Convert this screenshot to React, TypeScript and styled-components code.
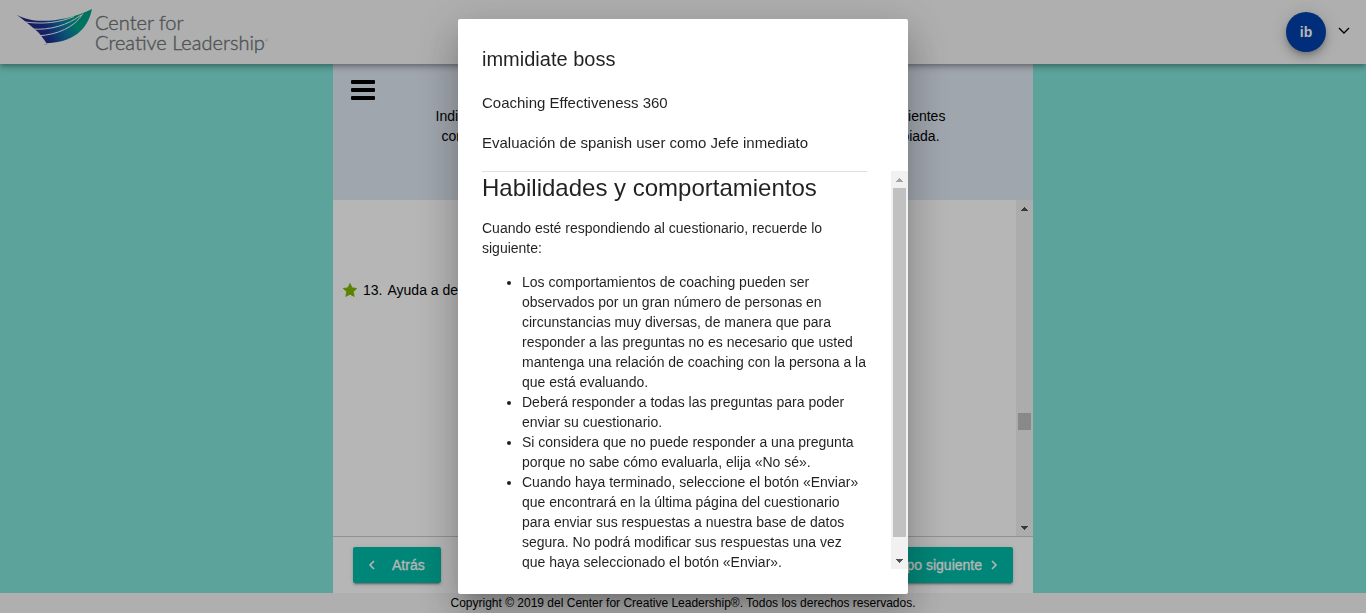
import React from "react";
import styled, { createGlobalStyle } from "styled-components";

const GlobalStyle = createGlobalStyle`
  * { box-sizing: border-box; }
  body {
    margin: 0;
    background: #80e5da;
    color: #000;
    font-family: "Liberation Sans", Arial, sans-serif;
    font-size: 14px;
    line-height: 20px;
  }
`;

const Page = styled.div`
  display: flex;
  flex-direction: column;
  height: 100vh;
`;

const TopBar = styled.header`
  flex: none;
  display: flex;
  align-items: center;
  justify-content: space-between;
  height: 64px;
  padding: 0 16px;
  background: #f5f5f5;
  position: relative;
  box-shadow: 0 2px 4px -1px rgba(0, 0, 0, 0.2), 0 4px 5px rgba(0, 0, 0, 0.14),
    0 1px 10px rgba(0, 0, 0, 0.12);
`;

const Brand = styled.a`
  display: flex;
  align-items: center;
  gap: 1px;
  color: #6f7779;
  text-decoration: none;
`;

const BrandName = styled.span`
  font-family: Lato, sans-serif;
  font-weight: 300;
  font-size: 20px;
  line-height: 20px;
  -webkit-text-stroke: 0.4px #6f7779;
  sup {
    font-size: 4px;
    line-height: 0;
    vertical-align: 8px;
    -webkit-text-stroke: 0;
  }
`;

const Account = styled.div`
  display: flex;
  align-items: center;
  gap: 12px;
`;

const Avatar = styled.span`
  display: grid;
  place-items: center;
  width: 40px;
  height: 40px;
  border-radius: 50%;
  background: #0041ab;
  color: #fff;
  font-weight: 700;
  box-shadow: 0 3px 5px -1px rgba(0, 0, 0, 0.2), 0 6px 10px rgba(0, 0, 0, 0.14),
    0 1px 18px rgba(0, 0, 0, 0.12);
`;

const IconButton = styled.button`
  display: flex;
  padding: 0;
  border: 0;
  background: none;
  color: #000;
`;

const Survey = styled.main`
  flex: 1;
  min-height: 0;
  display: flex;
  flex-direction: column;
  width: 100%;
  max-width: 700px;
  margin: 0 auto;
  background: #fff;
`;

const Intro = styled.section`
  flex: none;
  height: 136px;
  padding: 16px 18px;
  background: #e1e9f4;
`;

const IntroText = styled.p`
  max-width: 535px;
  margin: 6px auto 0;
  padding-left: 15px;
  text-align: center;
`;

const Questions = styled.section`
  flex: 1;
  min-height: 0;
  display: flex;
`;

const QuestionList = styled.div`
  flex: 1;
  overflow: hidden;
  padding: 80px 9px;
`;

const Question = styled.div`
  display: flex;
  align-items: center;
  gap: 5px;
`;

const ScrollTrack = styled.div`
  flex: none;
  display: flex;
  flex-direction: column;
  align-items: center;
  justify-content: space-between;
  width: 17px;
  background: #f1f1f1;
`;

const ScrollArrow = styled.svg`
  flex: none;
  display: block;
  width: 17px;
  height: 17px;
`;

const ScrollGap = styled.div<{ $grow: number }>`
  flex: ${(p) => p.$grow} 1 0;
`;

const ScrollThumb = styled.div<{ $grow?: number }>`
  flex: ${(p) => (p.$grow ? `${p.$grow} 1 0` : "0 0 17px")};
  width: 13px;
  background: #c1c1c1;
`;

const Actions = styled.div`
  flex: none;
  display: flex;
  align-items: center;
  justify-content: space-between;
  padding: 10px 20px;
  border-top: 1px solid #ccc;
`;

const NavButton = styled.button`
  display: flex;
  align-items: center;
  gap: 11px;
  height: 36px;
  padding: 0 16px 0 10px;
  border: 0;
  border-radius: 2px;
  background: #00bca8;
  color: #fff;
  font: 500 14px/36px "Liberation Sans", Arial, sans-serif;
  -webkit-text-stroke: 0.3px #fff;
  box-shadow: 0 3px 1px -2px rgba(0, 0, 0, 0.2), 0 2px 2px rgba(0, 0, 0, 0.14),
    0 1px 5px rgba(0, 0, 0, 0.12);
`;

const NextButton = styled(NavButton)`
  gap: 3px;
  padding: 0 10px 0 16px;
`;

const Copyright = styled.footer`
  flex: none;
  background: #f5f5f5;
  font-size: 12px;
  text-align: center;
`;

const Backdrop = styled.div`
  position: fixed;
  inset: 0;
  display: flex;
  align-items: center;
  justify-content: center;
  background: rgba(0, 0, 0, 0.288);
`;

const Dialog = styled.div`
  width: 450px;
  max-width: 80vw;
  padding: 24px 0 25px;
  border-radius: 2px;
  background: #fff;
  color: rgba(0, 0, 0, 0.87);
  box-shadow: 0 11px 15px -7px rgba(0, 0, 0, 0.2),
    0 24px 38px 3px rgba(0, 0, 0, 0.14), 0 9px 46px 8px rgba(0, 0, 0, 0.12);
`;

const DialogHead = styled.div`
  padding: 0 24px 18px;
`;

const DialogTitle = styled.h1`
  margin: 0 0 18px;
  font-size: 20px;
  font-weight: 400;
  line-height: 32px;
`;

const DialogLine = styled.p`
  margin: 0;
  font-size: 15px;
  & + & {
    margin-top: 20px;
  }
`;

const DialogScroll = styled.div`
  display: flex;
  height: calc(100vh - 215px);
`;

const DialogBody = styled.div`
  flex: 1;
  overflow: hidden;
  padding: 0 24px;
`;

const Divider = styled.hr`
  height: 1px;
  margin: 0;
  border: 0;
  background: #e0e0e0;
`;

const SectionTitle = styled.h2`
  margin: 0 0 14px;
  font-size: 24px;
  font-weight: 400;
  line-height: 32px;
`;

const Paragraph = styled.p`
  margin: 0 0 14px;
`;

const Rules = styled.ul`
  margin: 0;
  padding-left: 40px;
`;

function Logo() {
  return (
    <svg width="78" height="52" viewBox="16 6 78 52" aria-hidden="true">
      <defs>
        <linearGradient id="wing" x1="0" y1="0.2" x2="1" y2="0">
          <stop offset="0" stopColor="#26207c" />
          <stop offset="0.3" stopColor="#1c3394" />
          <stop offset="0.5" stopColor="#0f6fa6" />
          <stop offset="0.7" stopColor="#00a08c" />
          <stop offset="1" stopColor="#00a080" />
        </linearGradient>
      </defs>
      <path
        fill="url(#wing)"
        d="M16.500 14.800 C25 19 32 20.800 42 20.800 C56 21 74 18 92 9 C89 24 79 42 46.500 43.200 C43.500 39 41 35 38 32 C33 28 24 20 16.500 14.800Z"
      />
      <path
        fill="none"
        stroke="#f5f5f5"
        strokeWidth="1"
        d="M25 22 C44 24.500 60 22.500 74 16.500 M32 29 C50 30.500 68 25 81 15 M39 35.800 C57 34.500 74 28 83 13.500"
      />
      <text x="44" y="46" fontSize="3" fontFamily="Liberation Sans, sans-serif" fill="#6f7779">
        ™
      </text>
    </svg>
  );
}

function Arrow({ down, color = "#505050" }: { down?: boolean; color?: string }) {
  return (
    <ScrollArrow viewBox="0 0 17 17" shapeRendering="crispEdges" aria-hidden="true">
      <path
        fill={color}
        d={
          down
            ? "M5 7h7v1h-1v1h-1v1h-1v1h-1v-1h-1v-1h-1v-1h-1z"
            : "M5 11h7v-1h-1v-1h-1v-1h-1v-1h-1v1h-1v1h-1v1h-1z"
        }
      />
    </ScrollArrow>
  );
}

const Chevron = ({ d }: { d: string }) => (
  <svg
    width="18"
    height="18"
    viewBox="0 0 18 18"
    fill="none"
    stroke="currentColor"
    strokeWidth="1.6"
    aria-hidden="true"
  >
    <path d={d} />
  </svg>
);

export default function App() {
  return (
    <>
      <GlobalStyle />
      <Page>
        <TopBar>
          <Brand href="#">
            <Logo />
            <BrandName>
              Center for
              <br />
              Creative Leadership<sup>®</sup>
            </BrandName>
          </Brand>
          <Account>
            <Avatar>ib</Avatar>
            <IconButton aria-label="Cuenta">
              <svg
                width="12"
                height="12"
                viewBox="0 0 12 12"
                fill="none"
                stroke="currentColor"
                strokeWidth="1.4"
              >
                <path d="M1 2 L6 7 L11 2" />
              </svg>
            </IconButton>
          </Account>
        </TopBar>

        <Survey>
          <Intro>
            <IconButton aria-label="Menú">
              <svg width="24" height="20" viewBox="0 0 24 20" fill="currentColor">
                <rect width="24" height="4" rx="1" />
                <rect y="8" width="24" height="4" rx="1" />
                <rect y="16" width="24" height="4" rx="1" />
              </svg>
            </IconButton>
            <IntroText>
              Indique con cuánta frecuencia spanish user demuestra cada uno de los siguientes
              <br />
              comportamientos. Para ello, seleccione para cada uno la opción más apropiada.
            </IntroText>
          </Intro>
          <Questions>
            <QuestionList>
              <Question>
                <svg width="16" height="14" viewBox="0 0 24 23" fill="#7fba00" aria-hidden="true">
                  <path
                    stroke="#7fba00"
                    strokeWidth="1.500"
                    strokeLinejoin="round"
                    d="M12 1l3.300 7 7.700 1-5.600 5.300 1.400 7.700L12 18.300 5.200 22l1.400-7.700L1 9l7.700-1z"
                  />
                </svg>
                <span>13.</span>
                <span>Ayuda a desarrollar planes de acción.</span>
              </Question>
            </QuestionList>
            <ScrollTrack>
              <Arrow />
              <ScrollGap $grow={196} />
              <ScrollThumb />
              <ScrollGap $grow={89} />
              <Arrow down />
            </ScrollTrack>
          </Questions>
          <Actions>
            <NavButton>
              <Chevron d="M11 5 L7 9 L11 13" />
              Atrás
            </NavButton>
            <NextButton>
              Grupo siguiente
              <Chevron d="M7 5 L11 9 L7 13" />
            </NextButton>
          </Actions>
        </Survey>
        <Copyright>
          Copyright © 2019 del Center for Creative Leadership®. Todos los derechos reservados.
        </Copyright>
      </Page>

      <Backdrop>
        <Dialog role="dialog" aria-modal="true" aria-labelledby="dialog-title">
          <DialogHead>
            <DialogTitle id="dialog-title">immidiate boss</DialogTitle>
            <DialogLine>Coaching Effectiveness 360</DialogLine>
            <DialogLine>Evaluación de spanish user como Jefe inmediato</DialogLine>
          </DialogHead>
          <DialogScroll>
            <DialogBody>
              <Divider />
              <SectionTitle>Habilidades y comportamientos</SectionTitle>
              <Paragraph>Cuando esté respondiendo al cuestionario, recuerde lo siguiente:</Paragraph>
              <Rules>
                <li>
                  Los comportamientos de coaching pueden ser observados por un gran número de
                  personas en circunstancias muy diversas, de manera que para responder a las
                  preguntas no es necesario que usted mantenga una relación de coaching con la
                  persona a la que está evaluando.
                </li>
                <li>Deberá responder a todas las preguntas para poder enviar su cuestionario.</li>
                <li>
                  Si considera que no puede responder a una pregunta porque no sabe cómo
                  evaluarla, elija «No sé».
                </li>
                <li>
                  Cuando haya terminado, seleccione el botón «Enviar» que encontrará en la última
                  página del cuestionario para enviar sus respuestas a nuestra base de datos
                  segura. No podrá modificar sus respuestas una vez que haya seleccionado el botón
                  «Enviar».
                </li>
              </Rules>
            </DialogBody>
            <ScrollTrack>
              <Arrow color="#a3a3a3" />
              <ScrollThumb $grow={349} />
              <ScrollGap $grow={15} />
              <Arrow down />
            </ScrollTrack>
          </DialogScroll>
        </Dialog>
      </Backdrop>
    </>
  );
}
